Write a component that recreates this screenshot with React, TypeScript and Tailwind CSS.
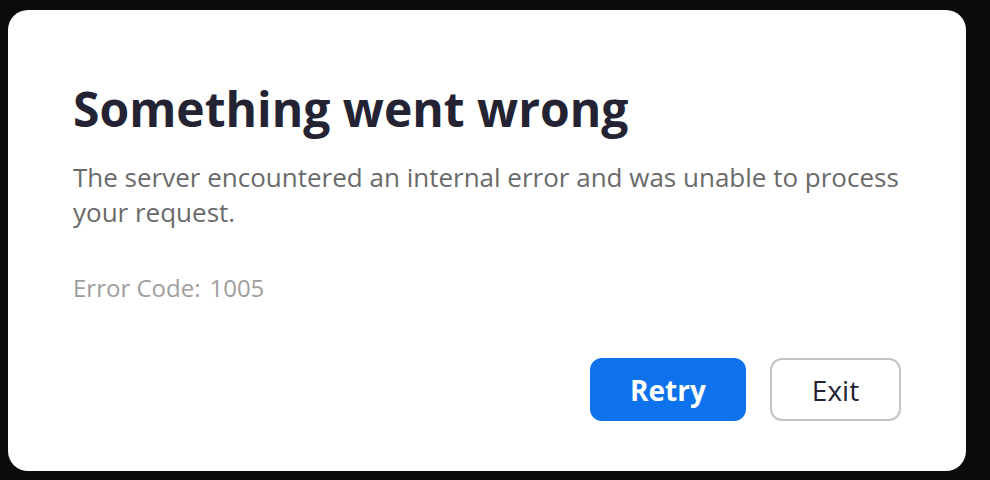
export default function App() {
  return (
    <div className="h-[480px] w-[990px] bg-[#0b0b0b] pl-[8px] pt-[10px] font-['Open_Sans',sans-serif]">
      <div className="flex h-[461px] w-[958px] flex-col rounded-[20px] bg-white px-[65px] pb-[50px] pt-[69px]">
        <h1 className="text-[48px] font-bold leading-[60px] text-[#232333]">
          Something went wrong
        </h1>
        <p className="mt-[21px] text-[26px] leading-[35px] text-[#6a6a6a]">
          The server encountered an internal error and was unable to process
          your request.
        </p>
        <div className="mt-[42px] flex text-[24px] leading-[32px] text-[#9e9e9e]">
          <span>Error Code:</span>
          <span className="ml-[9px]">1005</span>
        </div>
        <div className="mt-auto flex justify-end gap-[24px]">
          <button className="h-[63px] w-[156px] rounded-[12px] bg-[#0e72ed] text-[28px] font-bold text-white">
            Retry
          </button>
          <button className="h-[63px] w-[131px] rounded-[12px] border-2 border-[#c4c4c4] bg-white text-[28px] text-[#232333]">
            Exit
          </button>
        </div>
      </div>
    </div>
  );
}
